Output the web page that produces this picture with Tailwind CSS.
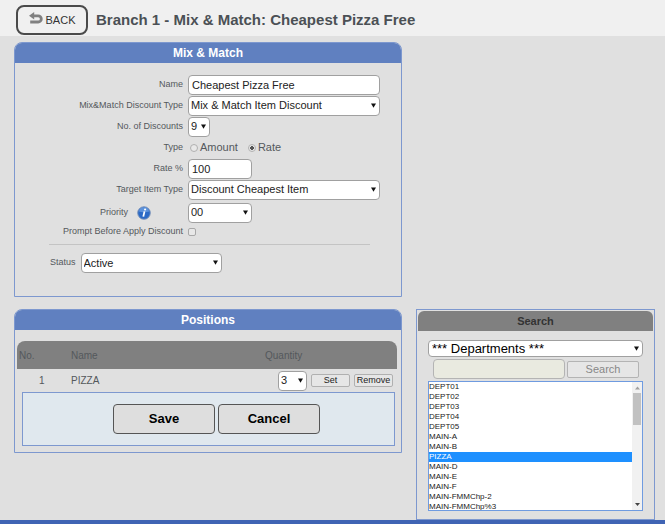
<!DOCTYPE html>
<html lang="en">
<head>
  <meta charset="UTF-8" />
  <meta name="viewport" content="width=device-width, initial-scale=1.0" />
  <title>Mix &amp; Match: Cheapest Pizza Free</title>
  <script src="https://cdn.jsdelivr.net/npm/@tailwindcss/browser@4"></script>
</head>
<body class="bg-[#e0e0e0] font-['Liberation_Sans',Arial,sans-serif] text-[#54585c] text-[11px] min-h-screen flex flex-col">

  <!-- Arrow shared by all drop-downs -->
  <svg class="hidden">
    <symbol id="arrow" viewBox="0 0 5 5"><path d="M0 0.5h5L2.5 4.8z" fill="#111" /></symbol>
  </svg>

  <!-- Top Bar -->
  <header class="bg-[#f0f0f0] h-9 pl-4 pt-1 flex items-center gap-2">
    <button class="h-[30px] w-[72px] border-2 border-[#4a4a4a] rounded-lg flex items-center justify-center gap-[3px] text-[#333] text-[11px]">
      <svg class="w-[14px] h-[12px] -mt-1" viewBox="0 0 14 12">
        <path d="M4 3.8h5.2a3 3 0 0 1 0 6.2H1.2" fill="none" stroke="#808080" stroke-width="2.8" />
        <path d="M0 3.8L5.2 0v7.6z" fill="#808080" />
      </svg>
      <span>BACK</span>
    </button>
    <h1 class="text-[15px] font-bold text-[#4b5055]">Branch 1 - Mix &amp; Match: Cheapest Pizza Free</h1>
  </header>

  <!-- Main Content -->
  <main class="flex-1 grid grid-cols-[minmax(0,388fr)_minmax(0,239fr)] grid-rows-[auto_1fr] gap-x-[14px] gap-y-3 pl-[14px] pr-[10px] pt-[6px]">

    <!-- Mix & Match -->
    <section class="border border-[#7d98cf] rounded-t-lg overflow-hidden h-[255px]">
      <h2 class="bg-[#6080c0] text-white text-[12px] font-bold text-center h-5 leading-5">Mix &amp; Match</h2>
      <form class="pt-[11px]">
        <div class="grid grid-cols-[168px_1fr] gap-x-[5px] items-center pr-[21px] auto-rows-[21px]">
          <label for="name" class="text-[9px] text-right">Name</label>
          <input id="name" type="text" value="Cheapest Pizza Free" class="bg-white border border-[#a0a0a0] rounded h-5 w-full px-[3px] text-[11px] text-[#222]" />

          <label for="discountType" class="text-[9px] text-right">Mix&amp;Match Discount Type</label>
          <div class="relative">
            <select id="discountType" class="block appearance-none bg-white border border-[#a0a0a0] rounded h-5 w-full px-[2px] text-[11px] text-[#222]">
              <option>Mix &amp; Match Item Discount</option>
            </select>
            <svg class="absolute right-1 top-[7px] w-[5px] h-[5px] pointer-events-none"><use href="#arrow" /></svg>
          </div>

          <label for="discounts" class="text-[9px] text-right">No. of Discounts</label>
          <div class="relative w-[22px]">
            <select id="discounts" class="block appearance-none bg-white border border-[#a0a0a0] rounded h-5 w-full px-[2px] text-[11px] text-[#222]">
              <option>9</option>
            </select>
            <svg class="absolute right-1 top-[7px] w-[5px] h-[5px] pointer-events-none"><use href="#arrow" /></svg>
          </div>

          <span class="text-[9px] text-right">Type</span>
          <div class="flex items-center pl-[2px]">
            <input id="amount" type="radio" name="type" class="appearance-none w-2 h-2 rounded-full border border-[#b0b0b0] bg-[#e8e8e8] checked:bg-[radial-gradient(#555_40%,#e8e8e8_45%)]" />
            <label for="amount" class="ml-[2px] mr-[10px]">Amount</label>
            <input id="rate" type="radio" name="type" checked class="appearance-none w-2 h-2 rounded-full border border-[#b0b0b0] bg-[#e8e8e8] checked:bg-[radial-gradient(#555_40%,#e8e8e8_45%)]" />
            <label for="rate" class="ml-[2px]">Rate</label>
          </div>

          <label for="ratePercent" class="text-[9px] text-right">Rate %</label>
          <input id="ratePercent" type="text" value="100" class="bg-white border border-[#a0a0a0] rounded h-5 w-16 px-[3px] text-[11px] text-[#222]" />

          <label for="target" class="text-[9px] text-right">Target Item Type</label>
          <div class="relative">
            <select id="target" class="block appearance-none bg-white border border-[#a0a0a0] rounded h-5 w-full px-[2px] text-[11px] text-[#222]">
              <option>Discount Cheapest Item</option>
            </select>
            <svg class="absolute right-1 top-[7px] w-[5px] h-[5px] pointer-events-none"><use href="#arrow" /></svg>
          </div>
        </div>

        <div class="grid grid-cols-[168px_1fr] gap-x-[5px] items-center h-[25px]">
          <div class="flex items-center justify-end gap-[9px] pr-8">
            <label for="priority" class="text-[9px]">Priority</label>
            <svg class="w-[14px] h-[14px]" viewBox="0 0 14 14">
              <circle cx="7" cy="7" r="6.3" fill="#2c6ac6" stroke="#7c93b8" stroke-width="0.9" />
              <path d="M1.8 5.5a5.3 5.3 0 0 1 10.4 0Q7 7 1.8 5.5z" fill="#7eaeea" opacity="0.6" />
              <circle cx="8.1" cy="3.5" r="1.1" fill="#fff" />
              <path d="M7.5 5.4L6.3 10.6" fill="none" stroke="#fff" stroke-width="1.8" />
            </svg>
          </div>
          <div class="relative w-16">
            <select id="priority" class="block appearance-none bg-white border border-[#a0a0a0] rounded h-5 w-full px-[2px] text-[11px] text-[#222]">
              <option>00</option>
            </select>
            <svg class="absolute right-1 top-[7px] w-[5px] h-[5px] pointer-events-none"><use href="#arrow" /></svg>
          </div>
        </div>

        <div class="grid grid-cols-[168px_1fr] gap-x-[5px] items-center h-[11px]">
          <label for="prompt" class="text-[9px] text-right">Prompt Before Apply Discount</label>
          <input id="prompt" type="checkbox" class="appearance-none w-2 h-2 rounded-[2px] border border-[#a8a8a8] bg-[#e8e8e8] checked:bg-[#555]" />
        </div>

        <hr class="border-[#c4c4c4] mt-2 ml-[34px] mr-[31px]" />

        <div class="flex items-center gap-[5px] pl-[35px] mt-2">
          <label for="status" class="text-[9px]">Status</label>
          <div class="relative w-[141px]">
            <select id="status" class="block appearance-none bg-white border border-[#a0a0a0] rounded h-5 w-full px-[2px] text-[11px] text-[#222]">
              <option>Active</option>
            </select>
            <svg class="absolute right-1 top-[7px] w-[5px] h-[5px] pointer-events-none"><use href="#arrow" /></svg>
          </div>
        </div>
      </form>
    </section>

    <!-- Positions -->
    <section class="col-start-1 row-start-2 self-start border border-[#7d98cf] rounded-t-lg overflow-hidden">
      <h2 class="bg-[#6080c0] text-white text-[12px] font-bold text-center h-5 leading-5">Positions</h2>
      <div class="pt-[11px] pb-[6px] pl-[2px] pr-[4px]">
        <table class="w-full table-fixed text-left text-[10px]">
          <thead>
            <tr class="h-7 bg-[#808080] text-[#54585c]">
              <th class="w-[54px] pl-[2px] font-normal rounded-tl-lg">No.</th>
              <th class="font-normal">Name</th>
              <th class="w-[132px] font-normal rounded-tr-lg">Quantity</th>
            </tr>
          </thead>
          <tbody>
            <tr class="h-[23px]">
              <td class="pl-[22px]">1</td>
              <td>PIZZA</td>
              <td>
                <div class="flex items-center justify-end gap-1 pr-1">
                  <div class="relative w-[29px]">
                    <select aria-label="Quantity" class="block appearance-none bg-white border border-[#a0a0a0] rounded h-5 w-full px-[2px] text-[11px] text-[#222]">
                      <option>3</option>
                    </select>
                    <svg class="absolute right-1 top-[7px] w-[5px] h-[5px] pointer-events-none"><use href="#arrow" /></svg>
                  </div>
                  <button class="bg-[#e6e6e6] border border-[#b0b0b0] rounded-[2px] w-[39px] h-[13px] leading-[11px] text-[9px] text-[#222]">Set</button>
                  <button class="bg-[#e6e6e6] border border-[#b0b0b0] rounded-[2px] w-[39px] h-[13px] leading-[11px] text-[9px] text-[#222]">Remove</button>
                </div>
              </td>
            </tr>
          </tbody>
        </table>
        <div class="bg-[#e0e8ee] border border-[#7d98cf] h-[54px] ml-[5px] mr-[2px] flex items-center justify-center gap-[3px] pl-4">
          <button class="bg-[#dedede] border border-[#555] rounded w-[102px] h-[30px] text-[13px] font-bold text-black">Save</button>
          <button class="bg-[#dedede] border border-[#555] rounded w-[102px] h-[30px] text-[13px] font-bold text-black">Cancel</button>
        </div>
      </div>
    </section>

    <!-- Search -->
    <section class="col-start-2 row-start-2 border border-[#7d98cf] p-px">
      <h2 class="bg-[#808080] text-[#333] text-[11px] font-bold text-center h-5 leading-5 rounded-t-md">Search</h2>
      <div class="pt-[9px] px-[10px]">
        <div class="relative">
          <select aria-label="Search in" class="block appearance-none bg-white border border-[#a0a0a0] rounded h-[17px] w-full px-[3px] text-[13px] leading-[15px] text-black">
            <option>*** Departments ***</option>
          </select>
          <svg class="absolute right-1 top-[6px] w-[5px] h-[5px] pointer-events-none"><use href="#arrow" /></svg>
        </div>
        <div class="flex items-center gap-[2px] pl-[5px] pr-1 mt-[2px]">
          <input type="text" aria-label="Search text" class="flex-1 min-w-0 bg-[#e9eae0] border border-[#b4b4b4] rounded h-5 px-1" />
          <button class="bg-[#e6e6e6] border border-[#b4b4b4] rounded-[2px] w-[72px] h-[17px] leading-[15px] text-[11px] text-[#888]">Search</button>
        </div>
        <div class="flex mt-[2px] h-[130px] bg-white border border-[#6f9be0]">
          <select size="13" aria-label="Departments" class="flex-1 min-w-0 h-full overflow-y-auto [scrollbar-width:none] text-[8px] leading-[10px] text-[#222]">
            <option class="p-0 h-[10px] min-h-0">DEPT01</option>
            <option class="p-0 h-[10px] min-h-0">DEPT02</option>
            <option class="p-0 h-[10px] min-h-0">DEPT03</option>
            <option class="p-0 h-[10px] min-h-0">DEPT04</option>
            <option class="p-0 h-[10px] min-h-0">DEPT05</option>
            <option class="p-0 h-[10px] min-h-0">MAIN-A</option>
            <option class="p-0 h-[10px] min-h-0">MAIN-B</option>
            <option selected class="p-0 h-[10px] min-h-0 checked:bg-[linear-gradient(#1e90ff,#1e90ff)] [-webkit-text-fill-color:white]">PIZZA</option>
            <option class="p-0 h-[10px] min-h-0">MAIN-D</option>
            <option class="p-0 h-[10px] min-h-0">MAIN-E</option>
            <option class="p-0 h-[10px] min-h-0">MAIN-F</option>
            <option class="p-0 h-[10px] min-h-0">MAIN-FMMChp-2</option>
            <option class="p-0 h-[10px] min-h-0">MAIN-FMMChp%3</option>
          </select>
          <!-- Scrollbar -->
          <div class="w-[10px] bg-[#f1f1f1] flex flex-col items-center">
            <svg class="w-[5px] h-[11px]" viewBox="0 0 5 11"><path d="M0 7.5h5L2.5 4.5z" fill="#a0a0a0" /></svg>
            <div class="w-2 h-8 bg-[#c1c1c1]"></div>
            <svg class="w-[5px] h-[11px] mt-auto" viewBox="0 0 5 11"><path d="M0 4h5L2.5 7z" fill="#444" /></svg>
          </div>
        </div>
      </div>
    </section>
  </main>

  <footer class="h-1 bg-[#4064b4]"></footer>
</body>
</html>
